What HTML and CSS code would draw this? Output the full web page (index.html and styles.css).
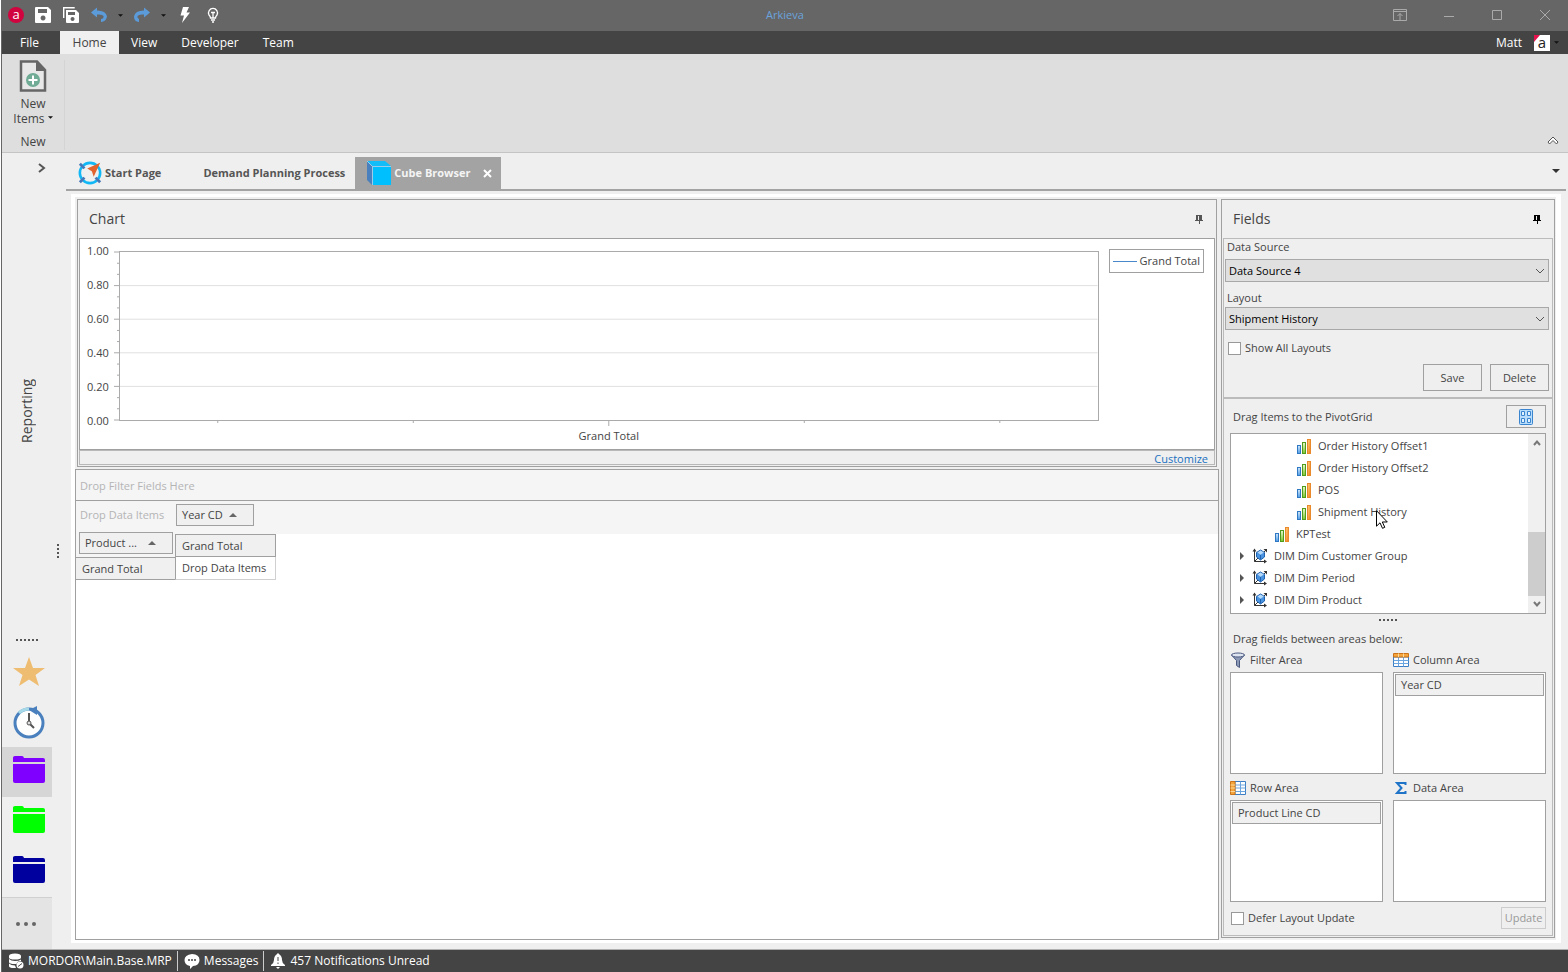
FILE: index.html
```html
<!DOCTYPE html>
<html lang="en">
<head>
    <title>Arkieva</title>
    <meta charset="UTF-8"/>
    <link rel="stylesheet" href="styles.css">
</head>
<body>
<!-- shared icons -->
<svg class="defs" width="0" height="0">
    <defs>
        <linearGradient id="gBlue" x1="0" y1="0" x2="0" y2="1"><stop offset="0" stop-color="#d3e9fb"/><stop offset="1" stop-color="#4f9be3"/></linearGradient>
        <linearGradient id="gGreen" x1="0" y1="0" x2="0" y2="1"><stop offset="0" stop-color="#e9f9cf"/><stop offset="1" stop-color="#7cc42e"/></linearGradient>
        <linearGradient id="gOrange" x1="0" y1="0" x2="1" y2="1"><stop offset="0" stop-color="#ffd27a"/><stop offset="1" stop-color="#f07c1c"/></linearGradient>
        <symbol id="bars" viewBox="0 0 16 16">
            <rect x="1.5" y="7.5" width="3" height="8" fill="url(#gBlue)" stroke="#2f78c4"/>
            <rect x="6.5" y="4.5" width="3" height="11" fill="url(#gGreen)" stroke="#4f9c1c"/>
            <rect x="11.5" y="1.5" width="3" height="14" fill="url(#gOrange)" stroke="#e8892c"/>
        </symbol>
        <symbol id="dim" viewBox="0 0 16 16">
            <path d="M2.5 2v11.5H14M2.5 13.5L6 10M11 5l3-3" fill="none" stroke="#333"/>
            <path d="M.5 3.5L2.5.5l2 3zM12 11.5l3 2-3 2zM11.5 1h3.500v3.500z" fill="#333"/>
            <path d="M8.5 2l4 2.500v4.500L8.500 12 4.500 9V4.500z" fill="#4a93e0" stroke="#1f62b0"/>
            <path d="M8.500 2.500l3.300 2-3.300 2.200-3-2.200z" fill="#b5dafa"/>
            <path d="M8.500 7v4.500" stroke="#1f62b0"/>
        </symbol>
        <symbol id="folder" viewBox="0 0 32 28">
            <path d="M0 7V2.500Q0 1 2 1h7q1.500 0 2 2h19q2 0 2 2v2z"/>
            <path d="M0 9h32v17q0 2-2 2H2q-2 0-2-2z"/>
        </symbol>
        <symbol id="pin" viewBox="0 0 8 9">
            <path d="M1 0h6v5h1v1H5v3H4V6H0V5h1zM3 1v4h1V1z" fill-rule="evenodd"/>
        </symbol>
        <symbol id="up" viewBox="0 0 8 4"><path d="M0 4l4-4 4 4z"/></symbol>
        <symbol id="down" viewBox="0 0 6 3"><path d="M0 0h6L3 3z"/></symbol>
        <symbol id="vee" viewBox="0 0 10 6"><path d="M1 1l4 4 4-4" fill="none" stroke="currentColor"/></symbol>
    </defs>
</svg>

<div class="window">
    <header class="titlebar">
        <div class="quick">
            <svg class="logo" width="16" height="16" viewBox="0 0 16 16"><circle cx="8" cy="8" r="8" fill="#d2043f"/><text x="8" y="12" text-anchor="middle" font-size="13" fill="#fff">a</text></svg>
            <button aria-label="Save"><svg width="16" height="16" viewBox="0 0 16 16"><path d="M1 0h12l3 3v12q0 1-1 1H1q-1 0-1-1V1q0-1 1-1zM3 2v4h9V2zM8 8.500a2.500 2.500 0 1 0 .1 0z" fill="#fff" fill-rule="evenodd"/></svg></button>
            <button aria-label="Save all"><svg width="16" height="16" viewBox="0 0 16 16"><path d="M.7 11V.7h11" fill="none" stroke="#fff" stroke-width="1.400"/><path d="M3 3h10l3 3v9q0 1-1 1H4q-1 0-1-1zM5 5v3h7V5zM9.500 10a2 2 0 1 0 .1 0z" fill="#fff" fill-rule="evenodd"/></svg></button>
            <button aria-label="Undo"><svg width="16" height="16" viewBox="0 0 16 16"><path d="M0 5.500L6 .5v3q9 0 10 6-1 5-6 5.500v-3q3-.5 2.500-3Q11.500 7 6 7.500v3z" fill="#5b9bd9"/></svg></button>
            <svg class="drop" width="5" height="3"><use href="#down"/></svg>
            <button aria-label="Redo"><svg width="16" height="16" viewBox="0 0 16 16"><path d="M16 5.500L10 .5v3q-9 0-10 6 0 5 5 5.500v-3q-2-1-1.500-3Q4.500 7 10 7.500v3z" fill="#5b9bd9"/></svg></button>
            <svg class="drop" width="5" height="3"><use href="#down"/></svg>
            <button aria-label="Run"><svg width="16" height="16" viewBox="0 0 16 16"><path d="M6 0h6L9.500 5.500H13L5 16l2-7.500H3.500z" fill="#fff"/></svg></button>
            <button aria-label="Tips"><svg width="16" height="16" viewBox="0 0 16 16" fill="none" stroke="#fff"><path d="M5.500 11q0-1.500-1.500-3A4.500 4.500 0 1 1 12 8q-1.500 1.500-1.500 3zM6 5.500h4M8 5.500V11M6 13h4M7 15h2" stroke-width="1.300"/></svg></button>
        </div>
        <h1 class="title">Arkieva</h1>
        <div class="winbuttons">
            <button aria-label="Ribbon display"><svg width="14" height="12" viewBox="0 0 14 12" fill="none" stroke="#aaa"><path d="M.5.500h13v11H.5zM.5 2.500h13M7 11V4.500M4.500 7L7 4.500 9.500 7"/></svg></button>
            <button aria-label="Minimize"><svg width="12" height="12"><path d="M1 7.500h10" stroke="#aaa"/></svg></button>
            <button aria-label="Maximize"><svg width="12" height="12"><path d="M1.500 1.500h9v9h-9z" fill="none" stroke="#aaa"/></svg></button>
            <button aria-label="Close"><svg width="12" height="12"><path d="M1 1l10 10M11 1L1 11" stroke="#aaa"/></svg></button>
        </div>
    </header>

    <nav class="menubar">
        <button class="menu menu-file">File</button>
        <button class="menu menu-active">Home</button>
        <button class="menu">View</button>
        <button class="menu">Developer</button>
        <button class="menu">Team</button>
        <div class="user">
            <span>Matt</span>
            <svg width="16" height="16" viewBox="0 0 16 16"><path d="M0 0h16v16H0z" fill="#fff"/><path d="M0 0h6L0 7z" fill="#e3124d"/><text x="8" y="13" text-anchor="middle" font-size="15" fill="#222">a</text></svg>
            <svg class="drop" width="5" height="3"><use href="#down"/></svg>
        </div>
    </nav>

    <section class="ribbon">
        <div class="ribbon-group">
            <button class="ribbon-button">
                <svg width="28" height="32" viewBox="0 0 28 32"><path d="M2 1.500h16L26 10v20.500H2z" fill="#e8e8e8" stroke="#666" stroke-width="2.500"/><path d="M17 1v10h10z" fill="#666"/><circle cx="14" cy="20" r="7" fill="#6fab95"/><path d="M14 15.500v9M9.500 20h9" stroke="#fff" stroke-width="2"/></svg>
                <span>New</span>
                <span>Items <svg class="drop" width="5" height="3"><use href="#down"/></svg></span>
            </button>
            <div class="ribbon-caption">New</div>
        </div>
        <button class="collapse" aria-label="Collapse ribbon"><svg width="12" height="9" viewBox="0 0 12 9"><path d="M6 1L1 6l1.500 2L6 4.500 9.500 8 11 6z" fill="#fff" stroke="#555"/></svg></button>
    </section>

    <div class="main">
        <aside class="sidebar">
            <div class="rail">
                <button class="expand" aria-label="Expand"><svg width="8" height="10" viewBox="0 0 8 10"><path d="M1 1l5 4-5 4" fill="none" stroke="#555" stroke-width="2"/></svg></button>
                <div class="rail-title"><span>Reporting</span></div>
                <svg class="rail-dots" width="22" height="2"><path d="M0 1h22" stroke="#555" stroke-width="2" stroke-dasharray="2 2"/></svg>
                <button class="rail-item" aria-label="Favorites"><svg width="32" height="32" viewBox="0 0 32 32"><path d="M16 1l4 11h12l-9.500 7L26 30l-10-6.500L6 30l3.500-11L0 12h12z" fill="#efbd72"/></svg></button>
                <button class="rail-item" aria-label="Recent"><svg width="32" height="32" viewBox="0 0 32 32"><circle cx="16" cy="17" r="14" fill="#fefefe" stroke="#4a80bd" stroke-width="3"/><path d="M6 7Q10 3 16 3" fill="none" stroke="#a5d9e8" stroke-width="3"/><path d="M16 4l8-4v9z" fill="#4a80bd"/><path d="M16 7v10l5 5" fill="none" stroke="#555" stroke-width="2"/><circle cx="16" cy="17" r="2" fill="#ddd" stroke="#555"/></svg></button>
                <button class="rail-item rail-folder rail-selected" aria-label="Purple folder"><svg class="purple" width="32" height="28"><use href="#folder"/></svg></button>
                <button class="rail-item rail-folder" aria-label="Green folder"><svg class="green" width="32" height="28"><use href="#folder"/></svg></button>
                <button class="rail-item rail-folder" aria-label="Blue folder"><svg class="navy" width="32" height="28"><use href="#folder"/></svg></button>
                <button class="rail-item rail-more" aria-label="More"><svg width="20" height="4" fill="#666"><circle cx="2" cy="2" r="2"/><circle cx="10" cy="2" r="2"/><circle cx="18" cy="2" r="2"/></svg></button>
            </div>
            <div class="splitter"><svg width="2" height="14"><path d="M1 0v14" stroke="#555" stroke-width="2" stroke-dasharray="2 2"/></svg></div>
        </aside>

        <div class="workspace">
            <div class="tabs">
                <button class="tab">
                    <svg width="24" height="24" viewBox="0 0 26 26"><circle cx="13" cy="13" r="11" fill="none" stroke="#12b8f5" stroke-width="2.800"/><path d="M2 3l5 5M2 23l5-5M24 23l-5-5" stroke="#4878b8" stroke-width="3"/><path d="M24 2L10 8l5 3 2 6z" fill="#e2632d"/></svg>
                    Start Page
                </button>
                <button class="tab tab-plain">Demand Planning Process</button>
                <button class="tab tab-active">
                    <svg width="24" height="24" viewBox="0 0 24 24"><path d="M0 0h18l6 5H5z" fill="#12bdf8"/><path d="M0 0l5 5v19l-5-5z" fill="#4a80bd"/><path d="M5.500 5.500H24V24H5.500z" fill="#00bfff"/><path d="M0 0l5.500 5.500V24M5.500 5.500H24" fill="none" stroke="#9ecbe8"/></svg>
                    Cube Browser
                    <svg class="tab-close" width="9" height="9"><path d="M1 1l7 7M8 1L1 8" stroke="#fff" stroke-width="2"/></svg>
                </button>
                <svg class="tabs-drop" width="8" height="4"><use href="#down"/></svg>
            </div>

            <div class="document">
                <div class="left">
                    <section class="panel chart-panel">
                        <div class="panel-head"><h2>Chart</h2><svg class="pin" width="8" height="9"><use href="#pin"/></svg></div>
                        <div class="chart">
                            <div class="y-axis"><span>1.00</span><span>0.80</span><span>0.60</span><span>0.40</span><span>0.20</span><span>0.00</span></div>
                            <div class="plot-wrap">
                                <div class="plot">
                                    <svg width="100%" height="100%">
                                        <g stroke="#e0e0e0">
                                            <line x1="0" x2="100%" y1="20%" y2="20%"/><line x1="0" x2="100%" y1="40%" y2="40%"/>
                                            <line x1="0" x2="100%" y1="60%" y2="60%"/><line x1="0" x2="100%" y1="80%" y2="80%"/>
                                        </g>
                                        <g stroke="#aaa">
                                            <line x1="-6" x2="0" y1="0" y2="0"/><line x1="-6" x2="0" y1="20%" y2="20%"/><line x1="-6" x2="0" y1="40%" y2="40%"/>
                                            <line x1="-6" x2="0" y1="60%" y2="60%"/><line x1="-6" x2="0" y1="80%" y2="80%"/><line x1="-6" x2="0" y1="100%" y2="100%"/>
                                            <line x1="-3" x2="0" y1="6.7%" y2="6.7%"/><line x1="-3" x2="0" y1="13.3%" y2="13.3%"/>
                                            <line x1="-3" x2="0" y1="26.7%" y2="26.7%"/><line x1="-3" x2="0" y1="33.3%" y2="33.3%"/>
                                            <line x1="-3" x2="0" y1="46.7%" y2="46.7%"/><line x1="-3" x2="0" y1="53.3%" y2="53.3%"/>
                                            <line x1="-3" x2="0" y1="66.7%" y2="66.7%"/><line x1="-3" x2="0" y1="73.3%" y2="73.3%"/>
                                            <line x1="-3" x2="0" y1="86.7%" y2="86.7%"/><line x1="-3" x2="0" y1="93.3%" y2="93.3%"/>
                                        </g>
                                        <!-- bottom ticks hang below the plot -->
                                        <svg y="100%" width="100%" height="8" class="x-ticks" stroke="#aaa">
                                            <line x1="10%" x2="10%" y1="0" y2="3"/><line x1="30%" x2="30%" y1="0" y2="3"/><line x1="50%" x2="50%" y1="0" y2="6"/>
                                            <line x1="70%" x2="70%" y1="0" y2="3"/><line x1="90%" x2="90%" y1="0" y2="3"/>
                                        </svg>
                                    </svg>
                                </div>
                                <div class="x-label">Grand Total</div>
                            </div>
                            <div class="legend"><svg width="24" height="1"><path d="M0 0h24v1H0z" fill="#4a88cc"/></svg>Grand Total</div>
                        </div>
                        <div class="chart-foot"><a href="#">Customize</a></div>
                    </section>

                    <section class="pivot">
                        <div class="filter-drop">Drop Filter Fields Here</div>
                        <table class="pivot-table">
                            <tr class="pivot-columns">
                                <td class="row-fields" rowspan="2">
                                    <div class="hint">Drop Data Items</div>
                                    <button class="field field-row">Product ... <svg width="8" height="4"><use href="#up"/></svg></button>
                                </td>
                                <td class="col-fields" colspan="2"><button class="field">Year CD <svg width="8" height="4"><use href="#up"/></svg></button></td>
                            </tr>
                            <tr><th class="total-col">Grand Total</th><td></td></tr>
                            <tr><th class="total-row">Grand Total</th><td class="data-cell">Drop Data Items</td><td></td></tr>
                        </table>
                    </section>
                </div>

                <section class="panel fields-panel">
                    <div class="panel-head"><h2>Fields</h2><svg class="pin pin-dark" width="8" height="9"><use href="#pin"/></svg></div>
                    <div class="fields">
                        <div class="source">
                            <label for="source" class="caption">Data Source</label>
                            <div class="select"><select id="source"><option>Data Source 4</option></select><svg width="10" height="6"><use href="#vee"/></svg></div>
                            <label for="layout" class="caption layout-label">Layout</label>
                            <div class="select"><select id="layout"><option>Shipment History</option></select><svg width="10" height="6"><use href="#vee"/></svg></div>
                            <label class="check"><input type="checkbox">Show All Layouts</label>
                            <div class="actions"><button class="btn">Save</button><button class="btn">Delete</button></div>
                        </div>
                        <div class="designer">
                            <div class="drag-head"><span>Drag Items to the PivotGrid</span>
                                <button class="btn view-btn" aria-label="Change view"><svg width="14" height="16" viewBox="0 0 14 16"><rect x=".5" y=".5" width="13" height="15" rx="1" fill="#b8dcfa" stroke="#3a85d0"/><g fill="#e4f2fd" stroke="#3a85d0"><path d="M2.500 2.500h3v4h-3zM8.500 2.500h3v4h-3zM2.500 9.500h3v4h-3zM8.500 9.500h3v4h-3z"/></g></svg></button>
                            </div>
                            <div class="tree-box">
                                <ul class="tree">
                                    <li class="level3"><svg width="16" height="16"><use href="#bars"/></svg>Order History Offset1</li>
                                    <li class="level3"><svg width="16" height="16"><use href="#bars"/></svg>Order History Offset2</li>
                                    <li class="level3"><svg width="16" height="16"><use href="#bars"/></svg>POS</li>
                                    <li class="level3"><svg width="16" height="16"><use href="#bars"/></svg>Shipment History
                                        <svg class="cursor" width="12" height="19" viewBox="0 0 12 19"><path d="M.5.700v15.500L4 12.800l2.500 5.500 2.300-1-2.500-5.300h5z" fill="#fff" stroke="#000"/></svg>
                                    </li>
                                    <li class="level2"><svg width="16" height="16"><use href="#bars"/></svg>KPTest</li>
                                    <li class="level1"><svg class="twist" width="4" height="8"><path d="M0 0l4 4-4 4z"/></svg><svg width="16" height="16"><use href="#dim"/></svg>DIM Dim Customer Group</li>
                                    <li class="level1"><svg class="twist" width="4" height="8"><path d="M0 0l4 4-4 4z"/></svg><svg width="16" height="16"><use href="#dim"/></svg>DIM Dim Period</li>
                                    <li class="level1"><svg class="twist" width="4" height="8"><path d="M0 0l4 4-4 4z"/></svg><svg width="16" height="16"><use href="#dim"/></svg>DIM Dim Product</li>
                                </ul>
                                <div class="scrollbar">
                                    <svg width="8" height="6" viewBox="0 0 8 6"><path d="M1 5l3-3.500L7 5" fill="none" stroke="#777" stroke-width="2"/></svg>
                                    <div class="thumb"></div>
                                    <svg width="8" height="6" viewBox="0 0 8 6"><path d="M1 1l3 3.500L7 1" fill="none" stroke="#777" stroke-width="2"/></svg>
                                </div>
                            </div>
                            <svg class="h-dots" width="18" height="2"><path d="M0 1h18" stroke="#555" stroke-width="2" stroke-dasharray="2 2"/></svg>
                            <div class="areas-title">Drag fields between areas below:</div>
                            <div class="areas">
                                <div class="area">
                                    <h3><svg width="16" height="16" viewBox="0 0 16 16"><path d="M1.500 3L6.500 8.500v5l3 2v-7L14.500 3z" fill="#8c9ab8" stroke="#4c5a80"/><ellipse cx="8" cy="3" rx="6.500" ry="2" fill="#dfe5f0" stroke="#4c5a80"/></svg>Filter Area</h3>
                                    <div class="area-box"></div>
                                </div>
                                <div class="area">
                                    <h3><svg width="16" height="14" viewBox="0 0 16 14"><path d="M.5 4h15v9.500H.5z" fill="#fff" stroke="#3b7ec4"/><path d="M.5 7.500h15M.5 10.500h15M5.500 4v9.500M10.500 4v9.500" stroke="#6aa5df"/><path d="M.5.500h15v3.500H.5z" fill="#f5a53b" stroke="#c9741a"/><path d="M5.500.500v3.500M10.500.500v3.500" stroke="#fbd79b"/></svg>Column Area</h3>
                                    <div class="area-box"><button class="area-field">Year CD</button></div>
                                </div>
                                <div class="area">
                                    <h3><svg width="16" height="14" viewBox="0 0 16 14"><path d="M5 .5h10.500v13H5z" fill="#fff" stroke="#3b7ec4"/><path d="M5 4h10.500M5 7h10.500M5 10.500h10.500M10.500.500v13" stroke="#6aa5df"/><path d="M.5.500H5v13H.5z" fill="#f5a53b" stroke="#c9741a"/><path d="M.5 4H5M.5 7H5M.5 10.500H5" stroke="#fbd79b"/></svg>Row Area</h3>
                                    <div class="area-box"><button class="area-field">Product Line CD</button></div>
                                </div>
                                <div class="area">
                                    <h3><svg width="16" height="14" viewBox="0 0 16 14"><path d="M12.500 4V2H4l4.500 5L4 12h8.500v-2" fill="none" stroke="#1f74c8" stroke-width="2"/></svg>Data Area</h3>
                                    <div class="area-box"></div>
                                </div>
                            </div>
                            <div class="defer">
                                <label class="check"><input type="checkbox">Defer Layout Update</label>
                                <button class="btn update" disabled>Update</button>
                            </div>
                        </div>
                    </div>
                </section>
            </div>
        </div>
    </div>

    <footer class="statusbar">
        <span class="status"><svg width="16" height="16" viewBox="0 0 16 16" fill="#fff"><path d="M1 3q0-2.500 6-2.500T13 3v1.500q0 2-6 2t-6-2zM1 6q2 2 6 2t6-1.500V8q-4 0-4.500 3H7Q1 11 1 9zM1 10.500q2 2 6 2l1 2.500Q1 15.500 1 13z"/><circle cx="12" cy="12" r="3.500"/><path d="M10 13.500l4-3" stroke="#444"/></svg>MORDOR\Main.Base.MRP</span>
        <span class="status"><svg width="16" height="16" viewBox="0 0 16 16"><path d="M8 1q7.500.5 7.500 6T9 13l-3 3v-3Q.5 12 .5 7T8 1z" fill="#fff"/><path d="M4 7h2M7 7h2M10 7h2" stroke="#444" stroke-width="1.500"/></svg>Messages</span>
        <span class="status"><svg width="16" height="16" viewBox="0 0 16 16" fill="#fff"><path d="M8 0l1.500 1.500Q12 3 12 7q0 3 3 5v1H1v-1q3-2 3-5 0-4 2.500-5.500zM6 14h4l-2 2z"/><path d="M8 4v4M8 9.500V11" stroke="#444"/></svg>457 Notifications Unread</span>
    </footer>
</div>
</body>
</html>
```

FILE: styles.css
```css
* {
    box-sizing: border-box;
}
body {
    margin: 0;
    background-color: #fff;
    color: #444;
    font-family: "Open Sans", "Noto Sans", sans-serif;
    font-size: 11px;
    line-height: 16px;
}
button, select, input {
    font: inherit;
    color: inherit;
}
button {
    background: none;
    border: none;
    padding: 0;
}
svg {
    display: block;
    flex: none;
    overflow: visible;
}
h1, h2, h3 {
    margin: 0;
    font-weight: normal;
}
.defs {
    position: absolute;
}
.window {
    display: flex;
    flex-direction: column;
    min-height: 100vh;
    margin-left: 1px;
    border-left: 1px solid #666;
    background-color: #efefef;
}

/* title bar */
.titlebar {
    display: grid;
    grid-template-columns: 1fr auto 1fr;
    align-items: center;
    height: 31px;
    padding-bottom: 1px;
    background-color: #666;
}
.quick {
    display: flex;
    align-items: center;
    gap: 12px;
    padding-left: 6px;
}
.quick .logo {
    margin-right: -1px;
}
.quick .drop {
    margin: 0 -1px;
}
.drop {
    fill: #111;
}
.title {
    font-size: 11px;
    color: #6ba3dc;
}
.winbuttons {
    display: flex;
    justify-content: flex-end;
    gap: 36px;
    padding-right: 17px;
}

/* ribbon */
.menubar {
    display: flex;
    height: 23px;
    background-color: #444;
    color: #fff;
    font-size: 12px;
}
.menu {
    padding: 1px 12px 0;
}
.menu-file {
    width: 58px;
    padding-right: 15px;
}
.menu-active {
    width: 59px;
    background-color: #f0f0f0;
    color: #444;
}
.user {
    display: flex;
    align-items: center;
    gap: 12px;
    margin-left: auto;
    padding-right: 9px;
}
.user .drop {
    margin-left: -8px;
}
.ribbon {
    display: flex;
    justify-content: space-between;
    align-items: flex-end;
    height: 99px;
    background-color: #dedede;
    border-bottom: 1px solid #c4c4c4;
    font-size: 12px;
}
.ribbon-group {
    align-self: stretch;
    display: flex;
    flex-direction: column;
    align-items: center;
    justify-content: space-between;
    width: 63px;
    margin: 6px 0 2px;
    border-right: 1px solid #d4d4d4;
}
.ribbon-button {
    display: flex;
    flex-direction: column;
    align-items: center;
    line-height: 15px;
}
.ribbon-button svg {
    margin-bottom: 4px;
}
.ribbon-button .drop {
    display: inline-block;
}
.collapse {
    padding: 0 9px 7px;
}

/* left rail */
.main {
    flex: 1;
    display: flex;
}
.sidebar {
    display: flex;
    width: 64px;
}
.rail {
    display: flex;
    flex-direction: column;
    align-items: center;
    width: 50px;
}
.expand {
    align-self: flex-end;
    height: 30px;
    padding-right: 6px;
}
.rail-title {
    flex: 1;
    display: flex;
    align-items: center;
    font-size: 14px;
    line-height: 20px;
}
.rail-title span {
    writing-mode: vertical-rl;
    transform: rotate(180deg);
}
.rail-dots {
    margin-bottom: 6px;
}
.rail-item {
    display: flex;
    align-items: center;
    justify-content: center;
    width: 50px;
    height: 50px;
    padding-left: 4px;
}
.rail-selected {
    background-color: #d6d6d6;
}
.rail-folder {
    padding-bottom: 6px;
}
.purple {
    fill: #8000ff;
}
.green {
    fill: #0f0;
}
.navy {
    fill: #00009f;
}
.rail-more {
    height: 52px;
    padding: 0 2px 0 0;
    background-color: #e4e4e4;
    border-top: 1px solid #d0d0d0;
}
.splitter {
    display: flex;
    align-items: center;
    padding-left: 5px;
}

/* document tabs */
.workspace {
    flex: 1;
    display: flex;
    flex-direction: column;
    min-width: 0;
}
.tabs {
    display: flex;
    align-items: flex-end;
    height: 38px;
    margin-right: 2px;
    border-bottom: 2px solid #a3a3a3;
}
.tab {
    display: flex;
    align-items: center;
    gap: 3px;
    height: 32px;
    padding: 0 12px;
    color: #555;
    font-weight: bold;
}
.tab-plain {
    padding: 0 10px 0 30px;
}
.tab-active {
    background-color: #a3a3a3;
    color: #f4f4f4;
    padding: 0 9px 0 12px;
}
.tab-close {
    margin-left: 10px;
}
.tabs-drop {
    align-self: center;
    margin-left: auto;
    margin-right: 6px;
    fill: #333;
}

/* docked panels */
.document {
    flex: 1;
    display: flex;
    gap: 2px;
    margin: 3px 7px 6px 5px;
    border: solid #fff;
    border-width: 3px 5px 3px 4px;
}
.left {
    flex: 1;
    display: flex;
    flex-direction: column;
    gap: 2px;
    min-width: 0;
}
.panel {
    display: flex;
    flex-direction: column;
    border: 1px solid #a0a0a0;
    padding: 0 1px 1px;
}
.panel-head {
    display: flex;
    align-items: center;
    justify-content: space-between;
    height: 38px;
    padding: 0 12px 0 10px;
    line-height: 20px;
}
.panel-head h2 {
    font-size: 14px;
}
.pin {
    fill: #555;
}
.pin-dark {
    fill: #000;
}
.chart-panel {
    margin: 2px 2px 0;
}
.chart {
    display: flex;
    height: 212px;
    padding: 10px 10px 5px 7px;
    background-color: #fff;
    border: 1px solid #a0a0a0;
}
.y-axis {
    display: flex;
    flex-direction: column;
    justify-content: space-between;
    width: 32px;
    height: 186px;
    margin-top: -6px;
}
.plot-wrap {
    flex: 1;
    margin-top: 2px;
}
.plot {
    height: 170px;
    border: 1px solid #aaa;
}
.x-label {
    margin-top: 7px;
    text-align: center;
}
.legend {
    display: flex;
    align-items: center;
    gap: 3px;
    height: 24px;
    margin-left: 10px;
    padding: 0 3px;
    border: 1px solid #a0a0a0;
}
.chart-foot {
    height: 15px;
    border: 1px solid #b8b8b8;
    padding-right: 6px;
    text-align: right;
}
.chart-foot a {
    color: #1a6fbf;
    text-decoration: none;
}

/* pivot grid */
.pivot {
    flex: 1;
    background-color: #fff;
    border: 1px solid #a0a0a0;
}
.filter-drop {
    height: 31px;
    padding: 8px 4px;
    background-color: #f5f5f6;
    border-bottom: 1px solid #a0a0a0;
    color: #b4b4b4;
}
.pivot-table {
    width: 100%;
    border-spacing: 0;
}
.pivot-table td, .pivot-table th {
    padding: 0;
    font-weight: normal;
    text-align: left;
}
.pivot-columns {
    height: 33px;
}
.row-fields, .col-fields {
    background-color: #f5f5f6;
    vertical-align: top;
}
.row-fields {
    width: 99px;
}
.row-fields .hint {
    margin: 6px 0 9px 4px;
    color: #b4b4b4;
    white-space: nowrap;
}
.field {
    display: flex;
    align-items: center;
    justify-content: space-between;
    width: 78px;
    height: 22px;
    padding: 0 16px 0 5px;
    border: 1px solid #a0a0a0;
    background-color: #f0f0f0;
}
.col-fields .field {
    margin: 3px 0 0 1px;
}
.field svg {
    fill: #666;
}
.field-row {
    width: 94px;
    margin-left: 3px;
}
.pivot-table .total-col, .pivot-table .total-row, .pivot-table .data-cell {
    border: 1px solid #a0a0a0;
    padding-left: 6px;
    height: 23px;
}
.pivot-table .total-col {
    width: 101px;
    background-color: #f0f0f0;
}
.pivot-table .total-row {
    border-left: none;
    border-right: none;
    background-color: #f0f0f0;
}
.pivot-table .data-cell {
    border-color: #d0d0d0;
    border-top: none;
    border-left-color: #a0a0a0;
    white-space: nowrap;
}

/* fields panel */
.fields-panel {
    width: 334px;
    margin: 2px 1px 2px 0;
}
.fields {
    flex: 1;
    border: 1px solid #bbb;
}
.source {
    padding: 0 3px 0 1px;
    height: 160px;
    border-bottom: 2px solid #bbb;
}
.caption {
    display: block;
    padding-left: 2px;
}
.select {
    position: relative;
    margin-top: 4px;
}
.select svg {
    position: absolute;
    right: 4px;
    top: 9px;
    color: #555;
    pointer-events: none;
}
.select select {
    appearance: none;
    display: block;
    width: 100%;
    height: 23px;
    padding: 0 3px;
    border: 1px solid #a8a8a8;
    border-radius: 0;
    background-color: #e0e0e0;
    color: #000;
}
.layout-label {
    margin-top: 8px;
    margin-bottom: -3px;
}
.check {
    display: flex;
    align-items: center;
    gap: 4px;
}
.source .check {
    margin-top: 10px;
    padding-left: 3px;
}
.check input {
    appearance: none;
    width: 13px;
    height: 13px;
    margin: 0;
    border: 1px solid #999;
    background-color: #fff;
}
.actions {
    display: flex;
    justify-content: flex-end;
    gap: 8px;
    margin-top: 8px;
}
.btn {
    width: 59px;
    height: 27px;
    border: 1px solid #a0a0a0;
}
.designer {
    padding: 6px 6px 0;
}
.drag-head {
    display: flex;
    align-items: center;
    justify-content: space-between;
    padding-left: 3px;
}
.view-btn {
    display: flex;
    align-items: center;
    justify-content: center;
    width: 40px;
    height: 23px;
}
.tree-box {
    display: flex;
    height: 181px;
    margin-top: 5px;
    border: 1px solid #a0a0a0;
    background-color: #fff;
}
.tree {
    flex: 1;
    margin: 0;
    padding: 1px 0 0;
    list-style: none;
}
.tree li {
    position: relative;
    display: flex;
    align-items: center;
    gap: 6px;
    height: 22px;
}
.level3 {
    padding-left: 65px;
}
.level2 {
    padding-left: 43px;
}
.level1 {
    padding-left: 9px;
}
.twist {
    margin-right: 2px;
    fill: #555;
}
.cursor {
    position: absolute;
    left: 145px;
    top: 9px;
}
.scrollbar {
    display: flex;
    flex-direction: column;
    align-items: center;
    width: 17px;
    padding: 6px 0;
    background-color: #f0f0f0;
}
.thumb {
    width: 17px;
    height: 64px;
    margin-top: auto;
    margin-bottom: 5px;
    background-color: #cdcdcd;
}
.h-dots {
    margin: 5px auto 0;
}
.areas-title {
    margin-top: 10px;
    padding-left: 3px;
}
.areas {
    display: grid;
    grid-template-columns: 1fr 1fr;
    gap: 5px 10px;
    margin-top: 4px;
}
.area h3 {
    display: flex;
    align-items: center;
    gap: 4px;
    height: 21px;
    padding-bottom: 3px;
    font-size: 11px;
}
.area-box {
    height: 102px;
    padding: 1px;
    border: 1px solid #a0a0a0;
    background-color: #fff;
}
.area-field {
    width: 100%;
    height: 22px;
    padding-left: 5px;
    border: 1px solid #a0a0a0;
    background-color: #f0f0f0;
    text-align: left;
}
.defer {
    display: flex;
    align-items: center;
    justify-content: space-between;
    margin-top: 5px;
    padding-left: 1px;
}
.update {
    width: 45px;
    height: 22px;
    border-color: #ccc;
    color: #999;
}

/* status bar */
.statusbar {
    display: flex;
    align-items: center;
    height: 23px;
    padding-bottom: 1px;
    background-color: #444;
    border-top: 1px solid #b0b0b0;
    color: #fff;
    font-size: 12px;
}
.status {
    display: flex;
    align-items: center;
    gap: 4px;
    height: 20px;
    padding: 0 5px 0 6px;
}
.status + .status {
    border-left: 1px solid #ccc;
}
```
